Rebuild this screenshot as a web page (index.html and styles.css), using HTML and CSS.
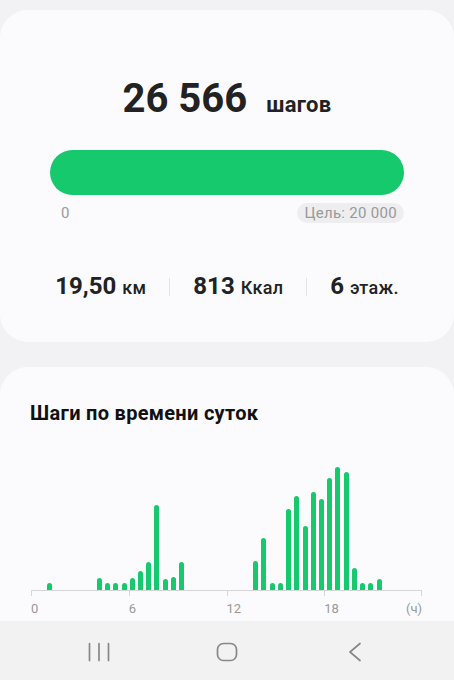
FILE: index.html
```html
<!DOCTYPE html>
<html lang="ru">
<head>
    <meta charset="UTF-8">
    <meta name="viewport" content="width=device-width, initial-scale=1.0">
    <title>Шаги</title>
    <link rel="stylesheet" href="styles.css">
</head>
<body>

    <div class="card summary">
        <div class="total">26 566<span class="unit">шагов</span></div>
        <div class="progress"></div>
        <div class="scale">
            <span class="start">0</span>
            <span class="goal">Цель: 20 000</span>
        </div>
        <div class="stats">
            <span>19,50<small>км</small></span>
            <span class="sep"></span>
            <span>813<small>Ккал</small></span>
            <span class="sep"></span>
            <span>6<small>этаж.</small></span>
        </div>
    </div>

    <div class="card daily">
        <h2>Шаги по времени суток</h2>
        <div class="chart">
            <!-- one slot per half hour -->
            <div class="bars">
                <span></span><span></span><span class="bar" style="height:7px"></span><span></span>
                <span></span><span></span><span></span><span></span>
                <span class="bar" style="height:12px"></span><span class="bar" style="height:7px"></span><span class="bar" style="height:7px"></span><span class="bar" style="height:7px"></span>
                <span class="bar" style="height:12px"></span><span class="bar" style="height:19px"></span><span class="bar" style="height:28px"></span><span class="bar" style="height:85px"></span>
                <span class="bar" style="height:11px"></span><span class="bar" style="height:13px"></span><span class="bar" style="height:28px"></span><span></span>
                <span></span><span></span><span></span><span></span>
                <span></span><span></span><span></span><span class="bar" style="height:29px"></span>
                <span class="bar" style="height:52px"></span><span class="bar" style="height:7px"></span><span class="bar" style="height:7px"></span><span class="bar" style="height:81px"></span>
                <span class="bar" style="height:94px"></span><span class="bar" style="height:64px"></span><span class="bar" style="height:98px"></span><span class="bar" style="height:91px"></span>
                <span class="bar" style="height:112px"></span><span class="bar" style="height:123px"></span><span class="bar" style="height:118px"></span><span class="bar" style="height:22px"></span>
                <span class="bar" style="height:7px"></span><span class="bar" style="height:7px"></span><span class="bar" style="height:11px"></span><span></span>
                <span></span><span></span><span></span><span></span>
            </div>
            <div class="axis"><span></span><span></span><span></span><span></span></div>
            <div class="hours">
                <span>0</span>
                <span>6</span>
                <span>12</span>
                <span><em>18</em><em>(ч)</em></span>
            </div>
        </div>
    </div>

    <div class="navbar">
        <span>
            <svg width="24" height="20" viewBox="0 0 24 20" fill="none" stroke="#888" stroke-width="1.7" stroke-linecap="round">
                <path d="M2.5 1.5v17M12 1.5v17M21.5 1.5v17"/>
            </svg>
        </span>
        <span>
            <svg width="22" height="20" viewBox="0 0 22 20" fill="none" stroke="#888" stroke-width="1.7">
                <rect x="1.5" y="1.5" width="19" height="17" rx="6"/>
            </svg>
        </span>
        <span>
            <svg width="14" height="20" viewBox="0 0 14 20" fill="none" stroke="#888" stroke-width="1.7" stroke-linecap="round" stroke-linejoin="round">
                <path d="M12 1.5L2 10l10 8.5"/>
            </svg>
        </span>
    </div>

</body>
</html>
```

FILE: styles.css
```css
body {
    margin: 0;
    background-color: #f2f2f4;
    font-family: Roboto, "Noto Sans", sans-serif;
    color: #222;
}
.card {
    background-color: #fbfbfd;
    border-radius: 28px;
}
.summary {
    margin-top: 10px;
    padding: 65px 50px 40px;
}
.total {
    text-align: center;
    font-size: 40px;
    line-height: 48px;
    font-weight: 700;
}
.total .unit {
    font-size: 22px;
    line-height: 1;
    margin-left: 19px;
    letter-spacing: 0.3px;
}
.progress {
    height: 45px;
    margin-top: 27px;
    border-radius: 23px;
    background-color: #16c96c;
}
.scale {
    display: flex;
    justify-content: space-between;
    align-items: center;
    margin-top: 8px;
    font-size: 15px;
    line-height: 20px;
    color: #999;
}
.scale .start {
    padding-left: 11px;
}
.goal {
    background-color: #eeeef0;
    border-radius: 10px;
    padding: 0 7px;
    letter-spacing: 0.3px;
}
.stats {
    display: flex;
    justify-content: center;
    align-items: center;
    gap: 23px;
    margin-top: 49px;
    font-size: 24px;
    line-height: 28px;
    font-weight: 700;
}
.stats small {
    font-size: 18px;
    font-weight: 500;
    margin-left: 6px;
    letter-spacing: 0.3px;
}
.stats .sep {
    width: 1px;
    height: 18px;
    background-color: #e4e4e6;
}
.daily {
    margin-top: 25px;
    padding: 34px 0 4px;
    border-radius: 28px 28px 0 0;
}
.daily h2 {
    margin: 0 0 25px 30px;
    font-size: 20px;
    line-height: 24px;
    font-weight: 700;
    letter-spacing: 0.3px;
    color: #111;
}
.chart {
    margin-left: 31px;
    width: 391px;
}
.bars {
    display: grid;
    grid-template-columns: repeat(48, 1fr);
    align-items: end;
    width: 395px;
    height: 140px;
}
.bar {
    width: 5px;
    background-color: #16c96c;
    border-radius: 2.5px 2.5px 0 0;
}
.axis {
    display: grid;
    grid-template-columns: repeat(4, 1fr);
    height: 5px;
    border-top: 1px solid #d6d6d8;
}
.axis span {
    border-left: 1px solid #d6d6d8;
}
.axis span:last-child {
    border-right: 1px solid #d6d6d8;
}
.hours {
    display: grid;
    grid-template-columns: repeat(4, 1fr);
    margin-top: 5px;
    font-size: 13px;
    line-height: 16px;
    color: #999;
}
.hours span:last-child {
    display: flex;
    justify-content: space-between;
}
.hours em {
    font-style: normal;
}
.navbar {
    display: flex;
    justify-content: center;
    align-items: center;
    height: 61px;
    background-color: #f2f2f2;
}
.navbar span {
    width: 128px;
    display: flex;
    justify-content: center;
}
```
